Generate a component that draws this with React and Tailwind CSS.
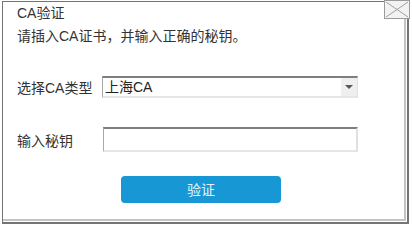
import React from "react";

export default function App() {
  return (
    <div
      className="w-[412px] h-[226px] bg-white relative overflow-hidden text-[14px] text-[#333]"
      style={{ fontFamily: '"Liberation Sans", "Noto Sans CJK SC", sans-serif' }}
    >
      <div className="ml-[2px] mt-[1px] w-[407px] h-[223px] border-l border-t border-r-2 border-b-2 border-[#747474] pr-px pb-px">
        <div className="h-full w-full border-r-2 border-b-2 border-[#c4c4c4] pl-[14px] pt-px flex flex-col">
          <div className="leading-[20px]">CA验证</div>
          <div className="leading-[20px] mt-[3px]">请插入CA证书，并输入正确的秘钥。</div>

          <div className="flex items-center mt-[30px] h-[22px]">
            <div className="w-[85px] leading-[20px] pt-px">选择CA类型</div>
            <div className="w-[256px] h-[22px] flex border-t-2 border-t-[#7e7e7e] border-l border-l-[#a8a8a8] border-b-2 border-b-[#e6e6e6] border-r border-r-[#e0e0e0]">
              <div className="flex-1 leading-[18px] pl-[2px] text-[#222]">上海CA</div>
              <div className="w-[16px] h-full bg-[#efefef] flex items-center justify-center">
                <svg width="8" height="5" viewBox="0 0 8 5">
                  <path d="M0 0 L8 0 L4 4 Z" fill="#555" />
                </svg>
              </div>
            </div>
          </div>

          <div className="flex items-center mt-[29px] h-[25px]">
            <div className="w-[86px] leading-[20px] pt-[2px]">输入秘钥</div>
            <div className="w-[255px] h-[25px] border-t-2 border-t-[#7e7e7e] border-l border-l-[#a8a8a8] border-b-2 border-b-[#e6e6e6] border-r-2 border-r-[#e0e0e0] bg-white"></div>
          </div>

          <div className="mt-[24px] ml-[104px] w-[160px] h-[27px] rounded-[4px] bg-[#1798d5] text-[#e6f3fb] flex items-center justify-center leading-[20px]">
            验证
          </div>
        </div>
      </div>

      <div className="absolute left-[384px] top-0 w-[26px] h-[19px] bg-[#f2f2f2] border border-[#9a9a9a]">
        <svg width="24" height="17" viewBox="0 0 24 17" className="block">
          <path d="M1 1 L23 16 M23 1 L1 16" stroke="#a0a0a0" strokeWidth="1" fill="none" />
        </svg>
      </div>
    </div>
  );
}
